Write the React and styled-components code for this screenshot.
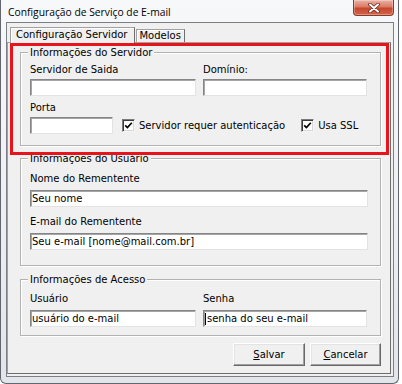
import React from "react";
import styled, { createGlobalStyle } from "styled-components";

const GlobalStyle = createGlobalStyle`
  html, body {
    margin: 0;
    padding: 0;
    background: #ffffff;
  }
  body {
    font-family: "DejaVu Sans", Verdana, sans-serif;
    font-size: 10px;
    color: #000;
  }
  * {
    box-sizing: border-box;
  }
`;

const Window = styled.div`
  width: 399px;
  height: 384px;
  border: 1px solid #63676d;
  border-top: none;
  border-radius: 0 0 6px 6px;
  background: linear-gradient(#f7f8fa, #eceef1 60%, #e2e5e9);
  padding: 0 4px 6px 5px;
  display: flex;
  flex-direction: column;
`;

const TitleBar = styled.div`
  height: 22px;
  display: flex;
  align-items: flex-start;
  flex-shrink: 0;
`;

const Title = styled.div`
  font-family: "Open Sans", "Liberation Sans", sans-serif;
  font-size: 10.3px;
  line-height: 14px;
  padding: 5px 0 0 2px;
  color: #000;
`;

const CloseButton = styled.div`
  margin-left: auto;
  width: 41px;
  height: 16px;
  border: 1px solid #8a3a2c;
  border-top: none;
  border-radius: 0 0 4px 4px;
  background: linear-gradient(#ebb3a6, #db7a64 45%, #c7452d 55%, #d2674a);
  box-shadow: inset 0 0 0 1px rgba(255, 255, 255, 0.3);
  display: flex;
  align-items: center;
  justify-content: center;
`;

const Client = styled.div`
  flex: 1;
  display: flex;
  flex-direction: column;
  background: #f0f0f0;
  border: 1px solid #7b8088;
  padding: 4px 2px 2px 0;
`;

const TabStrip = styled.div`
  display: flex;
  align-items: flex-end;
  padding-left: 3px;
  position: relative;
  z-index: 1;
`;

const Tab = styled.div`
  background: #f0f0f0;
  border: 1px solid #a0a0a0;
  border-right-color: #6f6f6f;
  border-bottom: none;
  box-shadow: inset 1px 1px 0 #fff;
  white-space: nowrap;
  height: ${(p) => (p.$active ? 16 : 13)}px;
  line-height: ${(p) => (p.$active ? 14 : 12)}px;
  padding: ${(p) => (p.$active ? "0 7px 0 5px" : "0 3px 0 2px")};
  margin-left: ${(p) => (p.$active ? 0 : 1)}px;
  margin-bottom: ${(p) => (p.$active ? -1 : 0)}px;
`;

const Panel = styled.div`
  flex: 1;
  display: flex;
  flex-direction: column;
  border: 1px solid;
  border-color: #a0a0a0 #6d6d6d #6d6d6d #a0a0a0;
  padding: 0 1px 6px 2px;
`;

const Highlight = styled.div`
  border: 3px solid #e8141c;
  padding: 0 5px 6px 7px;
  position: relative;
  z-index: 1;
`;

const Group = styled.fieldset`
  margin: ${(p) => p.$mt || 0}px ${(p) => p.$mr || 0}px 0
    ${(p) => p.$ml || 0}px;
  padding: ${(p) => p.$pt}px 12px ${(p) => p.$pb}px 9px;
  border: 1px solid #b2b2b2;
  box-shadow: inset 1px 1px 0 #fff, 1px 1px 0 #fff;
  min-width: 0;
`;

const Legend = styled.legend`
  margin-left: -2px;
  padding: 0 2px;
  line-height: 13px;
  background: #f0f0f0;
  position: relative;
`;

const Columns = styled.div`
  display: grid;
  grid-template-columns: 166px 164px;
  column-gap: 7px;
  row-gap: ${(p) => p.$gap || 3}px;
`;

const Label = styled.div`
  line-height: 13px;
  height: 13px;
  white-space: nowrap;
  margin-top: ${(p) => p.$mt || 0}px;
`;

const Field = styled.div`
  height: 17px;
  width: ${(p) => (p.$w ? `${p.$w}px` : "auto")};
  flex-shrink: 0;
  margin-top: ${(p) => p.$mt || 0}px;
  background: #fff;
  border: 1px solid;
  border-color: #858585 #e3e3e3 #e3e3e3 #858585;
  box-shadow: inset 1px 1px 0 #a5a5a5;
  padding: 0 1px;
  line-height: 15px;
  white-space: nowrap;
  overflow: hidden;
  display: flex;
  align-items: center;
`;

const Caret = styled.span`
  display: inline-block;
  width: 1px;
  height: 12px;
  background: #000;
  margin-right: 1px;
`;

const OptionRow = styled.div`
  display: flex;
  align-items: center;
  margin-top: 3px;
`;

const CheckLabel = styled.label`
  display: flex;
  align-items: center;
  gap: 4px;
  margin-left: ${(p) => p.$ml}px;
  white-space: nowrap;
`;

const CheckBox = styled.span`
  width: 13px;
  height: 13px;
  background: #fff;
  border: 1px solid;
  border-color: #7a7a7a #f4f4f4 #f4f4f4 #7a7a7a;
  box-shadow: inset 1px 1px 0 #3c3c3c, inset -1px -1px 0 #d8d8d8;
  display: flex;
  align-items: center;
  justify-content: center;
`;

const ButtonRow = styled.div`
  display: flex;
  justify-content: flex-end;
  gap: 5px;
  margin: 7px 8px 0 0;
`;

const Button = styled.button`
  width: ${(p) => p.$w}px;
  height: 23px;
  margin: 0;
  padding: 0 0 1px;
  font: inherit;
  color: #000;
  background: #f0f0f0;
  border: 1px solid;
  border-color: #fff #696969 #696969 #fff;
  box-shadow: inset -1px -1px 0 #a0a0a0, inset 1px 1px 0 #e3e3e3;
`;

const Check = () => (
  <svg width="9" height="9" viewBox="0 0 9 9">
    <path
      d="M1.2 4.4 L3.4 6.6 L7.8 1.8"
      fill="none"
      stroke="#000"
      strokeWidth="1.7"
    />
  </svg>
);

const CloseGlyph = () => (
  <svg width="12" height="10" viewBox="0 0 12 10">
    <path
      d="M2 1.5 L10 8.5 M10 1.5 L2 8.5"
      stroke="#6b2a1f"
      strokeWidth="3.6"
      strokeLinecap="round"
    />
    <path
      d="M2 1.5 L10 8.5 M10 1.5 L2 8.5"
      stroke="#fff"
      strokeWidth="2"
      strokeLinecap="round"
    />
  </svg>
);

const App = () => {
  return (
    <>
      <GlobalStyle />
      <Window>
        <TitleBar>
          <Title>Configuração de Serviço de E-mail</Title>
          <CloseButton>
            <CloseGlyph />
          </CloseButton>
        </TitleBar>
        <Client>
          <TabStrip>
            <Tab $active>Configuração Servidor</Tab>
            <Tab>Modelos</Tab>
          </TabStrip>
          <Panel>
            <Highlight>
              <Group $pt={4} $pb={11}>
                <Legend>Informações do Servidor</Legend>
                <Columns>
                  <Label>Servidor de Saida</Label>
                  <Label>Domínio:</Label>
                  <Field />
                  <Field />
                </Columns>
                <Label $mt={5}>Porta</Label>
                <OptionRow>
                  <Field $w={83} />
                  <CheckLabel $ml={9}>
                    <CheckBox>
                      <Check />
                    </CheckBox>
                    Servidor requer autenticação
                  </CheckLabel>
                  <CheckLabel $ml={16}>
                    <CheckBox>
                      <Check />
                    </CheckBox>
                    Usa SSL
                  </CheckLabel>
                </OptionRow>
              </Group>
            </Highlight>
            <Group $mt={-3} $ml={10} $mr={8} $pt={7} $pb={15}>
              <Legend>Informações do Usuário</Legend>
              <Label>Nome do Rementente</Label>
              <Field $mt={5}>Seu nome</Field>
              <Label $mt={8}>E-mail do Rementente</Label>
              <Field $mt={5}>Seu e-mail [nome@mail.com.br]</Field>
            </Group>
            <Group $mt={7} $ml={10} $mr={8} $pt={6} $pb={8}>
              <Legend>Informações de Acesso</Legend>
              <Columns $gap={5}>
                <Label>Usuário</Label>
                <Label>Senha</Label>
                <Field>usuário do e-mail</Field>
                <Field>
                  <Caret />
                  senha do seu e-mail
                </Field>
              </Columns>
            </Group>
            <ButtonRow>
              <Button $w={72}>
                <u>S</u>alvar
              </Button>
              <Button $w={71}>
                <u>C</u>ancelar
              </Button>
            </ButtonRow>
          </Panel>
        </Client>
      </Window>
    </>
  );
};

export default App;
